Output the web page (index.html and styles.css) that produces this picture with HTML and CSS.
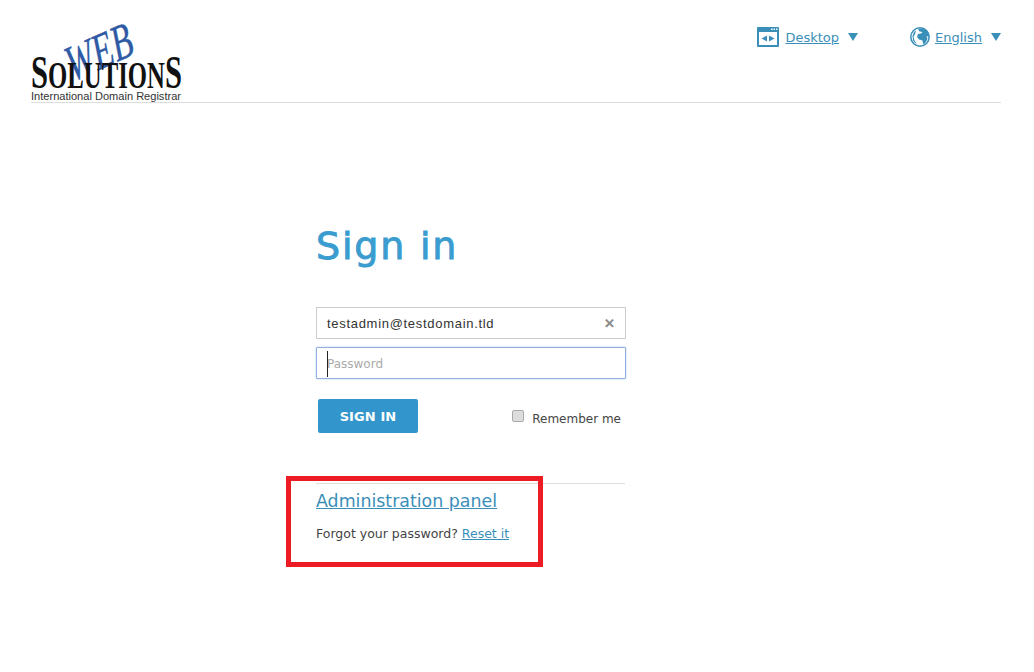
FILE: index.html
```html
<!DOCTYPE html>
<html lang="en">
<head>
<meta charset="UTF-8">
<meta name="viewport" content="width=device-width, initial-scale=1.0">
<title>Sign in</title>
<link rel="stylesheet" href="styles.css">
</head>
<body>
  <div class="header">
    <svg class="logo" width="156" height="90" viewBox="0 0 156 90">
      <text class="logo-web" transform="translate(41 68) rotate(-24) skewX(-6)" textLength="70" lengthAdjust="spacingAndGlyphs">WEB</text>
      <text class="logo-solutions" x="0" y="74" textLength="151" lengthAdjust="spacingAndGlyphs">S<tspan class="logo-small">OLUTION</tspan>S</text>
      <text class="logo-tag" x="0" y="86" textLength="150" lengthAdjust="spacingAndGlyphs">International Domain Registrar</text>
    </svg>
    <div class="switchers">
      <div class="switcher switcher-desktop">
        <svg width="22" height="20" viewBox="0 0 22 20">
          <rect x="0" y="0" width="22" height="20" rx="1" fill="#3a8fb9"/>
          <rect x="2" y="5" width="18" height="13" fill="#fff"/>
          <rect x="14" y="1.500" width="1.500" height="1.500" fill="#fff"/>
          <rect x="16.500" y="1.500" width="1.500" height="1.500" fill="#fff"/>
          <rect x="19" y="1.500" width="1.500" height="1.500" fill="#fff"/>
          <path d="M4.500 11.500 L10 8.500 V14.500 Z M17.500 11.500 L12 8.500 V14.500 Z" fill="#3a8fb9"/>
        </svg>
        <a href="#">Desktop</a>
        <span class="arrow"></span>
      </div>
      <div class="switcher switcher-lang">
        <svg width="20" height="20" viewBox="0 0 20 20">
          <circle cx="10" cy="10" r="9.200" fill="#fff" stroke="#3a8fb9" stroke-width="1.500"/>
          <path d="M8 2 C12 0.500 16.500 2 18.500 6 L19 10 L16.500 9 L17.500 12 L15 16.500 L13 17 L12.500 13.500 L9 12.500 L7 10 L8 7 L11 6.500 L12.500 5 L9.500 4.500 Z" fill="#3a8fb9"/>
          <path d="M4 5 L6 3.500 L5 7 L3.500 10 L4.500 13.500 L6.500 16.500 L5 16 L3 13.500 L2.500 9 Z" fill="#3a8fb9"/>
        </svg>
        <a href="#">English</a>
        <span class="arrow"></span>
      </div>
    </div>
  </div>

  <div class="signin">
    <h1>Sign in</h1>
    <div class="field">
      <span class="email">testadmin@testdomain.tld</span>
      <span class="clear">&#10005;</span>
    </div>
    <div class="field field-focus">
      <span class="caret"></span>
      <span class="placeholder">Password</span>
    </div>
    <div class="actions">
      <button type="button" class="btn">SIGN IN</button>
      <label class="remember"><input type="checkbox"> Remember me</label>
    </div>
    <div class="links">
      <a href="#" class="admin">Administration panel</a>
      <p>Forgot your password? <a href="#">Reset it</a></p>
    </div>
  </div>

  <div class="callout"></div>
</body>
</html>
```

FILE: styles.css
```css
body {
  margin: 0;
  background-color: #fff;
  font-family: "DejaVu Sans", Verdana, sans-serif;
  color: #444;
  height: 672px;
  overflow: hidden;
  position: relative;
}

a {
  color: #3a8fb9;
}

.header {
  margin: 0 33px 0 31px;
  height: 102px;
  border-bottom: 1px solid #ddd;
  display: flex;
  justify-content: space-between;
}

.logo {
  margin-top: 14px;
  display: block;
}

.logo-solutions {
  font-family: "Liberation Serif", serif;
  font-size: 47px;
  font-weight: bold;
  fill: #111;
}

.logo-small {
  font-size: 38px;
}

.logo-web {
  font-family: "Liberation Serif", serif;
  font-size: 50px;
  font-style: italic;
  fill: #2f5aa5;
  stroke: #2f5aa5;
  stroke-width: 0.4px;
}

.logo-tag {
  font-family: "Liberation Sans", sans-serif;
  font-size: 10px;
  fill: #333;
}

.switchers {
  display: flex;
  gap: 52px;
  margin-top: 27px;
  align-items: flex-start;
}

.switcher {
  display: flex;
  align-items: center;
  height: 20px;
  font-size: 13px;
}

.switcher svg {
  margin-right: 6px;
}

.switcher-lang svg {
  margin-right: 5px;
}

.arrow {
  width: 0;
  height: 0;
  margin-left: 9px;
  margin-top: -1px;
  border-left: 5px solid transparent;
  border-right: 5px solid transparent;
  border-top: 8px solid #3a8fb9;
}

.signin {
  width: 310px;
  margin-left: 316px;
}

h1 {
  margin: 120px 0 38px;
  font-size: 38px;
  line-height: 46px;
  font-weight: normal;
  letter-spacing: 1.8px;
  color: #3a9ccf;
  -webkit-text-stroke: 0.9px #3a9ccf;
}

.field {
  box-sizing: border-box;
  height: 32px;
  border: 1px solid #ccc;
  margin-bottom: 8px;
  padding: 0 10px;
  display: flex;
  align-items: center;
  position: relative;
}

.email {
  flex: 1;
  font-family: "Liberation Sans", sans-serif;
  font-size: 13px;
  letter-spacing: 0.7px;
  color: #333;
}

.clear {
  font-size: 13px;
  font-weight: bold;
  color: #888;
  -webkit-text-stroke: 0.6px #888;
}

.field-focus {
  border-color: #8fb0e0;
  box-shadow: 0 0 2px #a8c4ee;
  border-radius: 1px;
  padding-top: 2px;
}

.caret {
  position: absolute;
  left: 10px;
  top: 3px;
  width: 1px;
  height: 26px;
  background-color: #222;
}

.placeholder {
  font-size: 12px;
  color: #aaa;
}

.actions {
  display: flex;
  justify-content: space-between;
  margin-top: 20px;
  padding: 0 5px 0 2px;
}

.btn {
  width: 100px;
  height: 34px;
  border: 0;
  border-radius: 2px;
  background-color: #3296cc;
  color: #fff;
  font-family: "DejaVu Sans", sans-serif;
  font-size: 13px;
  font-weight: bold;
  letter-spacing: 0.1px;
}

.remember {
  font-size: 12px;
  color: #444;
  display: flex;
  align-items: center;
  margin-top: 10px;
  height: 20px;
}

.remember input {
  appearance: none;
  box-sizing: border-box;
  margin: 0 8px 6px 0;
  width: 12px;
  height: 12px;
  border: 1px solid #aaa;
  border-radius: 2px;
  background-color: #ddd;
}

.links {
  margin-top: 50px;
  width: 309px;
  border-top: 1px solid #ddd;
  padding-top: 6px;
}

.admin {
  font-size: 17.4px;
  line-height: 22px;
  display: block;
}

.links p {
  margin: 14px 0 0;
  font-size: 12.5px;
  line-height: 16px;
}

.callout {
  position: absolute;
  left: 286px;
  top: 476px;
  width: 247px;
  height: 81px;
  border: 5px solid #ed1c24;
}
```
